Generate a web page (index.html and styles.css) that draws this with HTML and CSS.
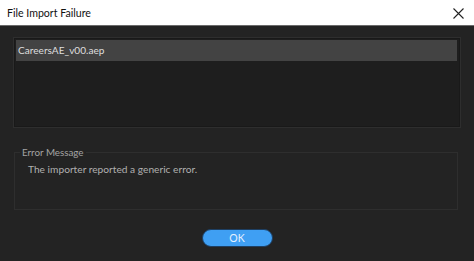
FILE: index.html
```html
<!DOCTYPE html>
<html lang="en">
<head>
    <meta charset="UTF-8">
    <meta name="viewport" content="width=device-width, initial-scale=1.0">
    <title>File Import Failure</title>
    <link rel="stylesheet" href="styles.css">
</head>
<body>
    <div class="titlebar">
        <span class="title">File Import Failure</span>
        <svg class="close" width="11" height="11" viewBox="0 0 11 11">
            <path d="M0.5 0.5 L10.5 10.5 M10.5 0.5 L0.5 10.5" stroke="#222" stroke-width="1.1" fill="none"/>
        </svg>
    </div>
    <div class="content">
        <div class="file-list">
            <div class="file-item selected">CareersAE_v00.aep</div>
        </div>
        <fieldset class="error-box">
            <legend>Error Message</legend>
            <div class="error-text">The importer reported a generic error.</div>
        </fieldset>
        <div class="actions">
            <button class="ok-btn">OK</button>
        </div>
    </div>
</body>
</html>
```

FILE: styles.css
```css
body {
    margin: 0;
    width: 474px;
    height: 261px;
    background-color: #232323;
    font-family: Lato, "Open Sans", sans-serif;
    font-size: 10px;
    overflow: hidden;
}
.titlebar {
    height: 25px;
    background-color: #ffffff;
    border-bottom: 1px solid #6a6a6a;
    display: flex;
    align-items: center;
    justify-content: space-between;
    padding: 0 10px 0 7px;
}
.title {
    color: #111111;
    font-size: 10.6px;
}
.close {
    margin-top: 1px;
}
.content {
    padding: 11px 13px 0 13px;
}
.file-list {
    height: 87px;
    background-color: #1e1e1e;
    border: 1px solid #2e2e2e;
    box-shadow: inset 0 0 0 1px #191919;
    padding: 2px 3px 0 2px;
}
.file-item {
    height: 21px;
    line-height: 21px;
    padding-left: 2px;
    color: #dedede;
    font-size: 10.1px;
}
.file-item.selected {
    background-color: #434343;
}
.error-box {
    margin: 17px 0 0 1px;
    width: 444px;
    border: 1px solid #2e2e2e;
    padding: 0 0 0 5px;
    box-sizing: border-box;
    height: 65px;
}
.error-box legend {
    padding: 0 2px;
    color: #a4a4a4;
    line-height: 14px;
    font-size: 9.8px;
}
.error-text {
    color: #b0b0b0;
    padding-left: 8px;
    margin-top: 4px;
    font-size: 10.2px;
}
.actions {
    display: flex;
    justify-content: center;
    margin-top: 19px;
}
.ok-btn {
    width: 71px;
    height: 18px;
    border-radius: 9px;
    border: 1px solid #1d3f63;
    background-color: #3f9ff3;
    color: #e4f1ff;
    font-family: Lato, "Open Sans", sans-serif;
    font-size: 10.5px;
    line-height: 14px;
    padding: 0;
}
```
